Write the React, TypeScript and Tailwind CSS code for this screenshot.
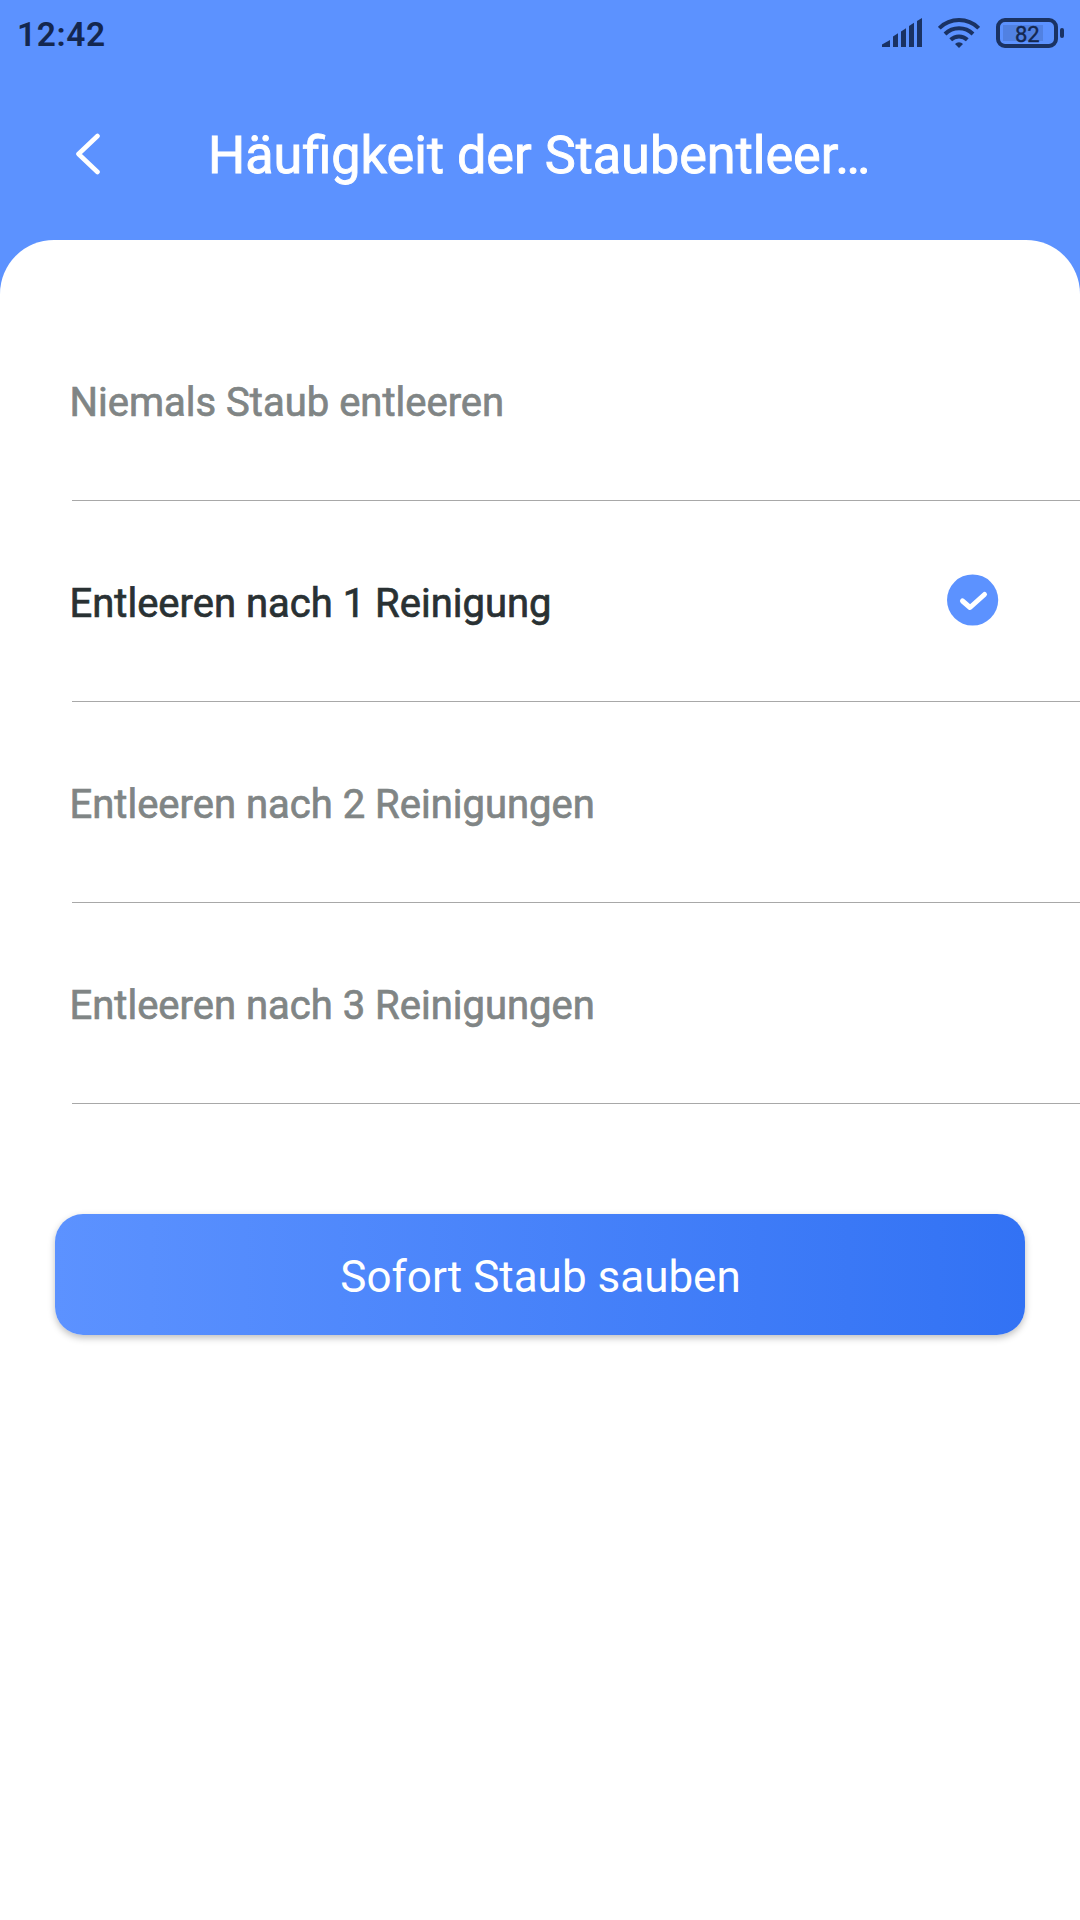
import clsx from "clsx";

interface Option {
  label: string;
  selected: boolean;
}

const options: Option[] = [
  { label: "Niemals Staub entleeren", selected: false },
  { label: "Entleeren nach 1 Reinigung", selected: true },
  { label: "Entleeren nach 2 Reinigungen", selected: false },
  { label: "Entleeren nach 3 Reinigungen", selected: false },
];

function SignalIcon() {
  return (
    <svg width="41" height="30" viewBox="0 0 41 30" fill="#1a3263">
      <path d="M0 29v-2.5L8 22v7z" />
      <path d="M11 29V18.5l5-3.2V29z" />
      <path d="M19 29V13.5l5-3.2V29z" />
      <path d="M27 29V8l5-3.2V29z" />
      <path d="M35 29V3l5-3v29z" />
    </svg>
  );
}

function WifiIcon() {
  return (
    <svg width="42" height="31" viewBox="0 0 42 31" fill="none" stroke="#1a3263" strokeWidth="4">
      <path d="M1.3 10.2a28 28 0 0 1 39.4 0" />
      <path d="M7 16a20 20 0 0 1 28 0" />
      <path d="M12.7 21.8a12 12 0 0 1 16.6 0" />
      <path d="M21 30l-4-4a5.6 5.6 0 0 1 8 0z" fill="#1a3263" stroke="none" />
    </svg>
  );
}

function Battery() {
  return (
    <div className="flex items-center gap-0.5">
      <div className="flex h-[30px] w-[62px] items-center rounded-[9px] border-4 border-[#1a3263] px-[3px]">
        <div className="flex h-4 w-10 items-center bg-[#5181e2]">
          <span className="w-full pt-[3px] pl-3 text-[22px] leading-4 text-[#14274f] [-webkit-text-stroke-width:0.4px]">
            82
          </span>
        </div>
      </div>
      <div className="h-[10px] w-1 rounded-sm bg-[#1a3263]" />
    </div>
  );
}

function StatusBar() {
  return (
    <div className="flex h-[66px] items-center justify-between pr-4 pl-[17px]">
      <span className="pt-[3px] text-[33.5px] leading-none font-semibold tracking-[0.6px] text-[#14274f]">
        12:42
      </span>
      <div className="flex items-center">
        <SignalIcon />
        <div className="pr-4 pl-[15px]">
          <WifiIcon />
        </div>
        <Battery />
      </div>
    </div>
  );
}

function CheckIcon() {
  return (
    <svg className="mb-0.5" width="52" height="52" viewBox="0 0 52 52" fill="none">
      <circle cx="25.6" cy="26" r="25.6" fill="#5c92ff" />
      <path
        d="M15.5 27l7.5 6.5L37.5 20.5"
        stroke="white"
        strokeWidth="5"
        strokeLinecap="round"
        strokeLinejoin="round"
      />
    </svg>
  );
}

function OptionRow({ option }: { option: Option }) {
  return (
    <li className="ml-[72px] flex h-[201px] items-center justify-between border-b border-[#a8a8a8] pr-[81px]">
      <span
        className={clsx(
          "-ml-[2.5px] pt-1.5 text-[40px] leading-none [-webkit-text-stroke-width:0.7px]",
          option.selected ? "text-[#293133]" : "text-[#808585]"
        )}
      >
        {option.label}
      </span>
      {option.selected && <CheckIcon />}
    </li>
  );
}

export default function App() {
  return (
    <div className="flex h-[1920px] w-[1080px] flex-col bg-[#5c92ff] font-[Roboto,sans-serif]">
      <StatusBar />

      <header className="flex h-[174px] items-center pt-[2px] pl-[75px]">
        <svg width="26" height="42" viewBox="0 0 26 42" fill="none">
          <path
            d="M22.5 3L3.5 21l19 18"
            stroke="white"
            strokeWidth="4.6"
            strokeLinecap="round"
            strokeLinejoin="round"
          />
        </svg>
        <h1 className="ml-[107px] pt-[5px] text-[52.2px] leading-none text-white [-webkit-text-stroke-width:0.9px]">
          Häufigkeit der Staubentleer…
        </h1>
      </header>

      <main className="flex-1 rounded-t-[54px] bg-white pt-[60px]">
        <ul>
          {options.map((option) => (
            <OptionRow key={option.label} option={option} />
          ))}
        </ul>

        <button className="mx-[55px] mt-[110px] flex h-[121px] w-[970px] items-center justify-center rounded-[28px] bg-linear-to-r from-[#5c92ff] to-[#3272f4] pt-1 pl-px text-[44px] leading-none text-white shadow-[0_3px_7px_rgba(0,0,0,0.25)]">
          Sofort Staub sauben
        </button>
      </main>
    </div>
  );
}
